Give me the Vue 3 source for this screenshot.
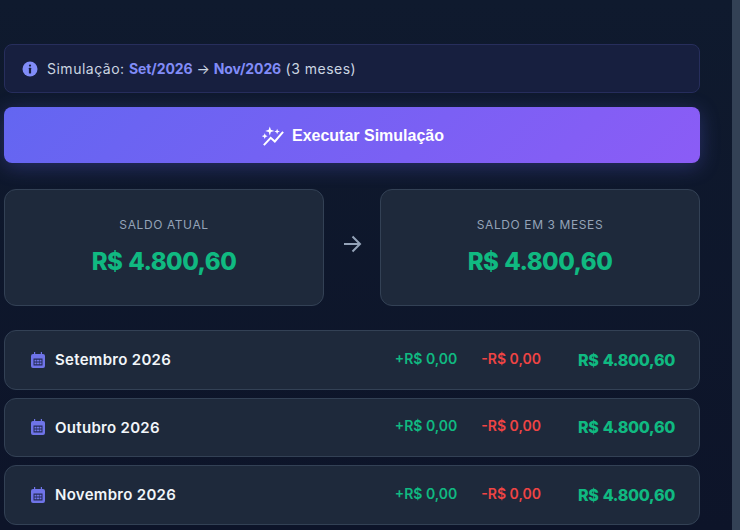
<script setup>
const months = [
  { name: 'Setembro 2026', income: '+R$ 0,00', expense: '-R$ 0,00', balance: 'R$ 4.800,60' },
  { name: 'Outubro 2026', income: '+R$ 0,00', expense: '-R$ 0,00', balance: 'R$ 4.800,60' },
  { name: 'Novembro 2026', income: '+R$ 0,00', expense: '-R$ 0,00', balance: 'R$ 4.800,60' }
];
</script>

<template>
  <div class="page">
    <main class="content">
      <div class="info-box">
        <svg class="info-icon" viewBox="0 0 16 16">
          <circle cx="8" cy="8" r="7.5" fill="#818cf8" />
          <circle cx="8" cy="4.6" r="1.1" fill="#171f3f" />
          <rect x="6.9" y="6.8" width="2.2" height="5.6" rx=".4" fill="#171f3f" />
        </svg>
        <span>Simulação: <strong>Set/2026</strong><span class="sep"> → </span><strong>Nov/2026</strong> (3 meses)</span>
      </div>

      <button class="run-btn">
        <svg class="run-icon" viewBox="0 0 24 24" fill="none" stroke="#fff" stroke-width="2.200">
          <path d="M2 22l7.500-8 4.500 4L23 7.500" />
          <path d="M8.500 1.500l1.200 3.800 3.800 1.200-3.800 1.200-1.200 3.800-1.200-3.800-3.800-1.200 3.800-1.200z" fill="#fff" stroke="none" />
          <path d="M3 9l.9 2.300 2.300.9-2.300.9-.9 2.300-.9-2.300-2.300-.9 2.300-.9z" fill="#fff" stroke="none" />
          <path d="M16.500 4l.8 2.200 2.200.8-2.200.8-.8 2.200-.8-2.200-2.200-.8 2.200-.8z" fill="#fff" stroke="none" />
        </svg>
        Executar Simulação
      </button>

      <section class="summary">
        <div class="card">
          <span class="card-label">SALDO ATUAL</span>
          <span class="card-value">R$ 4.800,60</span>
        </div>
        <svg class="arrow" viewBox="0 0 24 24" fill="none" stroke="#94a3b8" stroke-width="2">
          <path d="M4 12h15M12.500 4.500 20 12l-7.500 7.500" />
        </svg>
        <div class="card">
          <span class="card-label">SALDO EM 3 MESES</span>
          <span class="card-value">R$ 4.800,60</span>
        </div>
      </section>

      <section class="months">
        <div v-for="m in months" :key="m.name" class="month-row">
          <div class="month-name">
            <svg class="cal-icon" viewBox="0 0 14 16">
              <path d="M3 0h1.200v2h5.600V0H11v2h1a2 2 0 0 1 2 2v10a2 2 0 0 1-2 2H2a2 2 0 0 1-2-2V4a2 2 0 0 1 2-2h1z" fill="#6f74e8" />
              <path d="M2.500 6.500h9v7h-9zM3.500 7.700v1.700h2V7.700zm2.500 0v1.700h2V7.700zm2.500 0v1.700h2V7.700zM3.500 10.400v1.900h2v-1.900zm2.500 0v1.900h2v-1.900zm2.500 0v1.900h2v-1.900z" fill="#252b55" fill-rule="evenodd" />
            </svg>
            {{ m.name }}
          </div>
          <span class="income">{{ m.income }}</span>
          <span class="expense">{{ m.expense }}</span>
          <span class="balance">{{ m.balance }}</span>
        </div>
      </section>
    </main>
    <div class="scrollbar"></div>
  </div>
</template>

<style>
html,
body {
  margin: 0;
  background: #0f172a;
}
</style>

<style scoped>
.page {
  display: flex;
  width: 740px;
  height: 530px;
  overflow: hidden;
  background: linear-gradient(180deg, #0f1a2e, #0d1429);
  font-family: Inter, "Liberation Sans", sans-serif;
}

.content {
  width: 696px;
  margin-left: 4px;
  padding-top: 44px;
  flex-shrink: 0;
}

.scrollbar {
  width: 8px;
  height: 100%;
  margin-left: auto;
  background: #334155;
}

.info-box {
  display: flex;
  align-items: center;
  gap: 9px;
  box-sizing: border-box;
  height: 49px;
  padding: 0 17px;
  border: 1px solid #272e5c;
  border-radius: 8px;
  background: #171f3f;
  color: #cbd5e1;
  font-size: 14px;
  letter-spacing: 0.5px;
}

.info-box strong {
  color: #818cf8;
  font-weight: 700;
  letter-spacing: -0.1px;
}

.sep {
  letter-spacing: 0;
}

.info-icon {
  width: 16px;
  height: 16px;
}

.run-btn {
  display: flex;
  align-items: center;
  justify-content: center;
  gap: 8px;
  width: 100%;
  height: 56px;
  margin-top: 14px;
  padding: 2px 0 0 2px;
  border: 0;
  border-radius: 8px;
  background: linear-gradient(135deg, #6366f1, #8b5cf6);
  box-shadow: 0 4px 20px rgba(99, 102, 241, 0.3);
  color: #fff;
  font-family: "Liberation Sans", sans-serif;
  font-size: 16px;
  font-weight: 700;
}

.run-icon {
  width: 22px;
  height: 22px;
}

.summary {
  display: flex;
  align-items: center;
  gap: 16px;
  margin-top: 26px;
}

.card {
  display: flex;
  flex: 1;
  flex-direction: column;
  align-items: center;
  justify-content: center;
  gap: 15px;
  box-sizing: border-box;
  height: 117px;
  padding-bottom: 3px;
  border: 1px solid #334155;
  border-radius: 12px;
  background: #1e293b;
}

.card-label {
  color: #94a3b8;
  font-size: 12px;
  letter-spacing: 0.6px;
}

.card-value {
  color: #10b981;
  font-size: 24px;
  font-weight: 800;
  letter-spacing: -0.5px;
  word-spacing: 1px;
}

.arrow {
  width: 24px;
  height: 24px;
  margin-bottom: 7px;
}

.months {
  display: flex;
  flex-direction: column;
  gap: 8px;
  margin-top: 24px;
}

.month-row {
  display: flex;
  align-items: center;
  box-sizing: border-box;
  height: 59.5px;
  padding: 0 24px 0 26px;
  border: 1px solid #334155;
  border-radius: 12px;
  background: #1e293b;
}

.month-name {
  display: flex;
  flex: 1;
  align-items: center;
  gap: 10px;
  color: #f1f5f9;
  font-size: 15px;
  font-weight: 600;
  letter-spacing: 0.3px;
}

.cal-icon {
  width: 14px;
  height: 16px;
}

.income,
.expense {
  margin-bottom: 3px;
  font-size: 14px;
  font-weight: 600;
}

.income {
  color: #10b981;
}

.expense {
  margin-left: 24px;
  color: #ef4444;
}

.balance {
  width: 134px;
  color: #10b981;
  font-size: 16px;
  font-weight: 800;
  letter-spacing: -0.3px;
  word-spacing: 1px;
  text-align: right;
}
</style>
